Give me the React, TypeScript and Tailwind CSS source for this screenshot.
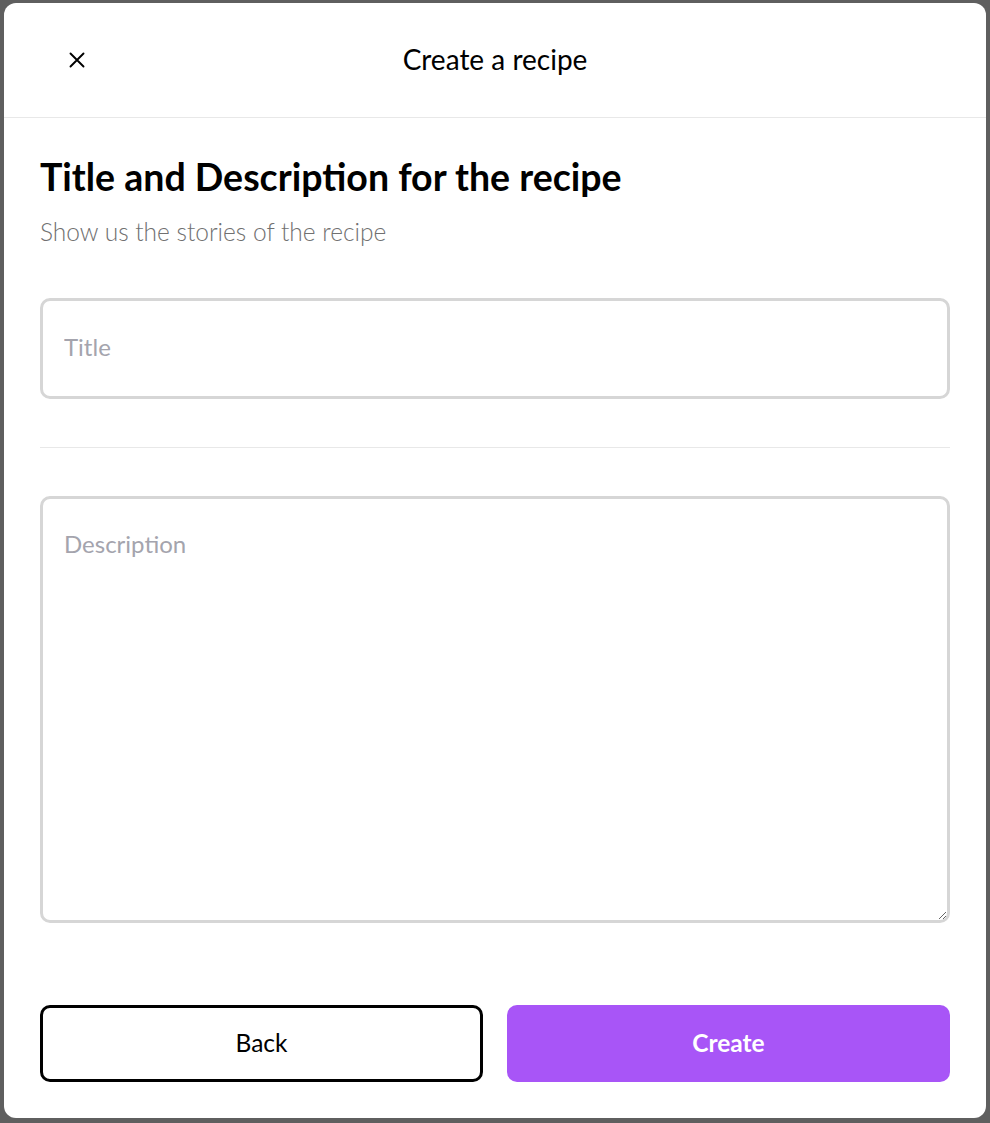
import React, { useState } from 'react';

export default function App() {
  const [title, setTitle] = useState('');
  const [description, setDescription] = useState('');

  return (
    <div
      className="h-screen w-full bg-[#5f5f5f] pt-[3px] pb-[5px] px-[4px]"
      style={{ fontFamily: 'Lato, "Noto Sans", sans-serif' }}
    >
      <div className="h-full bg-white rounded-[12px] flex flex-col">
        {/* Header */}
        <div className="relative h-[115px] shrink-0 border-b border-[#e8e8e8] flex items-center justify-center">
          <button className="absolute left-[63px] top-1/2 -translate-y-1/2 w-5 h-5 flex items-center justify-center text-black">
            <svg className="w-4 h-4" viewBox="0 0 16 16" fill="none" stroke="currentColor" strokeWidth={1.9} strokeLinecap="round">
              <path d="M1.5 1.5l13 13M14.5 1.5l-13 13" />
            </svg>
          </button>
          <h2 className="-mt-[2px] text-[28px] text-black">Create a recipe</h2>
        </div>

        {/* Body */}
        <div className="flex-1 flex flex-col px-9 pt-[37px] pb-9">
          <h1 className="text-[37.5px] leading-[44px] font-bold text-black">
            Title and Description for the recipe
          </h1>
          <p className="mt-[18px] text-[24.5px] leading-[30px] font-light text-[#707070]">
            Show us the stories of the recipe
          </p>

          <input
            value={title}
            onChange={(e) => setTitle(e.target.value)}
            placeholder="Title"
            className="mt-[51px] h-[101px] w-full rounded-[10px] border-[3px] border-[#d6d6d6] px-[21px] pb-[5px] text-[24px] text-black placeholder:text-[#a4a4ad] outline-none"
          />

          <div className="my-[48px] h-px bg-[#e8e8e8]" />

          <textarea
            value={description}
            onChange={(e) => setDescription(e.target.value)}
            placeholder="Description"
            className="h-[427px] w-full rounded-[10px] border-[3px] border-[#d6d6d6] px-[21px] pt-[30px] text-[24px] leading-[30px] text-black placeholder:text-[#a4a4ad] outline-none"
          />

          {/* Footer */}
          <div className="mt-auto grid grid-cols-2 gap-6">
            <button className="h-[77px] rounded-[10px] border-[3px] border-black bg-white text-[24.5px] text-black">
              Back
            </button>
            <button className="h-[77px] rounded-[10px] bg-[#a855f7] text-[24.5px] font-bold text-white">
              Create
            </button>
          </div>
        </div>
      </div>
    </div>
  );
}
